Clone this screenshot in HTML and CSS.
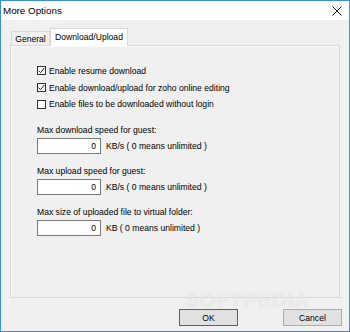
FILE: index.html
```html
<!DOCTYPE html>
<html>
<head>
<meta charset="utf-8">
<link rel="stylesheet" href="styles.css">
</head>
<body>
<div class="window">
  <div class="titlebar">
    <span class="title">More Options</span>
    <svg class="close" width="10" height="10" viewBox="0 0 10 10"><path d="M0.5 0.5 L9.5 9.5 M9.5 0.5 L0.5 9.5" stroke="#111" stroke-width="1" fill="none"/></svg>
  </div>
  <div class="content">
    <div class="tabs">
      <div class="tab">General</div>
      <div class="tab active">Download/Upload</div>
    </div>
    <div class="panel">
      <div class="checks">
        <div class="check-row">
          <span class="box"><svg width="7" height="7" viewBox="0 0 7 7"><path d="M0.6 3.6 L2.6 5.6 L6.5 0.8" stroke="#222" stroke-width="1" fill="none"/></svg></span>
          <span>Enable resume download</span>
        </div>
        <div class="check-row">
          <span class="box"><svg width="7" height="7" viewBox="0 0 7 7"><path d="M0.6 3.6 L2.6 5.6 L6.5 0.8" stroke="#222" stroke-width="1" fill="none"/></svg></span>
          <span>Enable download/upload for zoho online editing</span>
        </div>
        <div class="check-row">
          <span class="box"></span>
          <span>Enable files to be downloaded without login</span>
        </div>
      </div>
      <div class="field first">
        <div class="label">Max download speed for guest:</div>
        <div class="input-row"><div class="input">0</div><span class="unit">KB/s ( 0 means unlimited )</span></div>
      </div>
      <div class="field">
        <div class="label">Max upload speed for guest:</div>
        <div class="input-row"><div class="input">0</div><span class="unit">KB/s ( 0 means unlimited )</span></div>
      </div>
      <div class="field">
        <div class="label">Max size of uploaded file to virtual folder:</div>
        <div class="input-row"><div class="input">0</div><span class="unit">KB ( 0 means unlimited )</span></div>
      </div>
    </div>
    <div class="buttons">
      <div class="btn default">OK</div>
      <div class="btn">Cancel</div>
    </div>
    <div class="watermark">SOFTPEDIA</div>
  </div>
</div>
</body>
</html>
```
FILE: styles.css
```css
html, body {
  margin: 0;
  padding: 0;
}
body {
  font-family: "Liberation Sans", Arial, sans-serif;
  font-size: 8.6px;
  color: #000;
  background: #f0f0f0;
}
.window {
  width: 350px;
  height: 332px;
  box-sizing: border-box;
  border: 1px solid #3c8ddb;
  background: #f0f0f0;
  display: flex;
  flex-direction: column;
}
.titlebar {
  height: 19px;
  background: #fff;
  display: flex;
  align-items: center;
  justify-content: space-between;
  padding-left: 2px;
  padding-right: 7px;
}
.title {
  font-size: 9.8px;
  color: #000;
}
.close {
  display: block;
}
.content {
  flex: 1;
  padding: 8px 0 0 9px;
  position: relative;
}
.tabs {
  display: flex;
  align-items: flex-start;
  height: 18px;
  margin-bottom: -1px;
}
.tab {
  box-sizing: border-box;
  margin-top: 3px;
  margin-left: 1px;
  height: 14px;
  width: 39px;
  border: 1px solid #d9d9d9;
  border-bottom: none;
  background: #f0f0f0;
  display: flex;
  align-items: center;
  justify-content: center;
  padding-top: 1px;
}
.tab.active {
  margin-top: 0;
  margin-left: 0;
  height: 18px;
  width: 78px;
  background: #fff;
  position: relative;
  z-index: 1;
  padding-top: 0;
  padding-bottom: 1px;
}
.panel {
  box-sizing: border-box;
  width: 330px;
  height: 253px;
  border: 1px solid #d9d9d9;
  box-shadow: inset 1px 1px 0 #fbfbfb;
  background: #f0f0f0;
  padding: 16px 0 0 26px;
}
.checks {
  display: flex;
  flex-direction: column;
}
.check-row {
  height: 17px;
  display: flex;
  align-items: center;
}
.check-row:nth-child(3) {
  height: 16px;
}
.box {
  box-sizing: border-box;
  width: 9px;
  height: 9px;
  border: 1px solid #333;
  background: #fff;
  margin-right: 3px;
  display: flex;
  align-items: center;
  justify-content: center;
}
.box svg {
  display: block;
}
.field {
  margin-top: 11px;
}
.field.first {
  margin-top: 12px;
}
.label {
  height: 12px;
  line-height: 12px;
}
.input-row {
  margin-top: 2px;
  display: flex;
  align-items: center;
}
.input {
  box-sizing: border-box;
  width: 64px;
  height: 16px;
  border: 1px solid #7a7a7a;
  background: #fff;
  text-align: right;
  padding-right: 4px;
  line-height: 14px;
}
.unit {
  margin-left: 5px;
}
.buttons {
  display: flex;
  justify-content: flex-end;
  gap: 45px;
  margin-top: 11px;
  padding-right: 7px;
}
.btn {
  box-sizing: border-box;
  width: 59px;
  height: 17px;
  border: 1px solid #adadad;
  background: #e1e1e1;
  display: flex;
  align-items: center;
  justify-content: center;
}
.btn.default {
  border-color: #0078d7;
}
.watermark {
  position: absolute;
  left: 184px;
  top: 268px;
  font-size: 21px;
  font-weight: bold;
  letter-spacing: 0.5px;
  color: rgba(250, 250, 250, 0.5);
  text-shadow: 0 0 1px rgba(190, 190, 190, 0.45);
  pointer-events: none;
}
```
